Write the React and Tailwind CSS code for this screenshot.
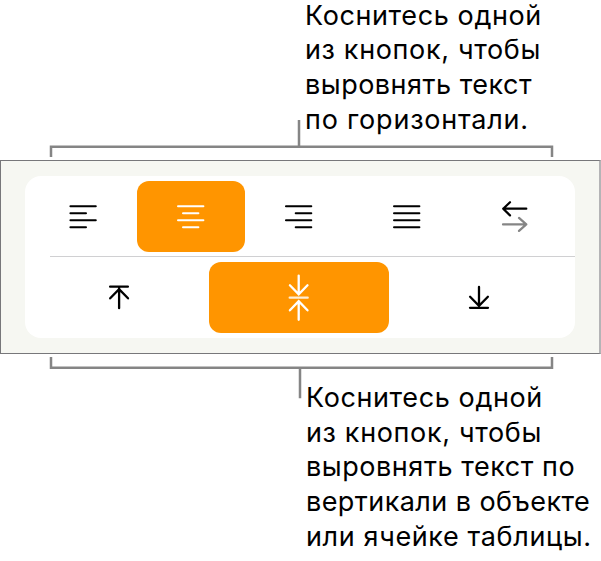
const ROW_ICONS = [
  { id: "left", d: "M1.4 2.3h25.400M1.4 9.300h15.600M1.4 16.300h25.400M1.4 23.300h15.600" },
  { id: "center", d: "M1 2.3h25.400M6 9.300h15.400M1 16.300h25.400M6 23.300h15.400" },
  { id: "right", d: "M0.9 2.3h25.400M10.7 9.300h15.600M0.9 16.300h25.400M10.7 23.300h15.600" },
  { id: "justify", d: "M1 2.3h25.400M1 9.300h25.400M1 16.300h25.400M1 23.300h25.400" },
];

function LinesIcon({ d }) {
  return (
    <svg width="28" height="25" viewBox="0 0 28 25" fill="none" stroke="currentColor" strokeWidth="2" strokeLinecap="round">
      <path d={d} />
    </svg>
  );
}

function DirectionIcon() {
  return (
    <svg width="28" height="33" viewBox="0 0 28 33" fill="none" strokeWidth="2.2" strokeLinecap="round" strokeLinejoin="round">
      <path d="M25.3 8.700H2.200M9 2.200L2.200 8.700l6.800 6.700" stroke="#000" />
      <path d="M2 24.400h23.300M18 17.900l7.300 6.500-7.300 6.500" stroke="#858585" />
    </svg>
  );
}

function TopIcon() {
  return (
    <svg width="22" height="27" viewBox="0 0 22 27" fill="none" stroke="currentColor" strokeWidth="2.3" strokeLinecap="round">
      <path d="M2.100 2.700h17.800M11.100 4v20.200M2.200 14.300l8.900-9.200 8.900 9.200" />
    </svg>
  );
}

function MiddleIcon() {
  return (
    <svg width="22" height="49" viewBox="0 0 22 49" fill="none" stroke="currentColor" strokeWidth="2.3" strokeLinecap="round">
      <path d="M10.700 2.600v18.600M1.900 12.300l8.800 9 8.800-9M10.700 46.800V28.200M1.900 37.300l8.800-9.200 8.800 9.200" />
      <path d="M1.700 24.700h18" stroke="#ffeed4" />
    </svg>
  );
}

function BottomIcon() {
  return (
    <svg width="22" height="27" viewBox="0 0 22 27" fill="none" stroke="currentColor" strokeWidth="2.3" strokeLinecap="round">
      <path d="M2 23.800h18M11 3v18.500M2.100 12.800l8.900 9 8.900-9" />
    </svg>
  );
}

export default function App() {
  return (
    <div className="flex h-[561px] w-[601px] flex-col bg-white font-['Inter',sans-serif] text-[27px] leading-[34.700px] text-black">
      <div className="relative h-40 shrink-0">
        <div className="ml-[305px] whitespace-nowrap">
          <p className="h-[33.300px] leading-[31px] tracking-[0.6px]">Коснитесь одной</p>
          <p className="tracking-[0.65px]">из кнопок, чтобы</p>
          <p className="tracking-[0.5px]">выровнять текст</p>
          <p className="tracking-[0.78px]">по горизонтали.</p>
        </div>
        <svg className="absolute top-0 left-0" width="601" height="160" fill="none" stroke="#858585" strokeWidth="2.5">
          <path d="M51 157v-10.200h501v10.200M299 120v26.800" />
        </svg>
      </div>

      <div className="h-[194px] w-[601px] shrink-0 border border-r-2 border-[#77777a] border-r-[#b4b4b6] bg-[#f6f7f2] px-6 py-[15px]">
        <div className="h-[162px] w-[549.500px] rounded-2xl bg-white pt-[5px]">
          <div className="flex h-[71px] pl-1">
            {ROW_ICONS.map((icon) => (
              <button
                key={icon.id}
                className={
                  icon.id === "center"
                    ? "flex w-[108px] items-center justify-center rounded-xl bg-[#ff9500] text-white"
                    : "flex w-[108px] items-center justify-center"
                }
              >
                <LinesIcon d={icon.d} />
              </button>
            ))}
            <button className="flex w-[108px] items-center justify-center">
              <DirectionIcon />
            </button>
          </div>
          <div className="mt-1 ml-[25px] h-px bg-[#d0d0d2]" />
          <div className="mt-[5px] flex h-[71px] pl-1">
            <button className="flex w-[180px] items-center justify-center">
              <TopIcon />
            </button>
            <button className="flex w-[180px] items-center justify-center rounded-xl bg-[#ff9500] text-white">
              <MiddleIcon />
            </button>
            <button className="flex w-[180px] items-center justify-center">
              <BottomIcon />
            </button>
          </div>
        </div>
      </div>

      <div className="relative h-[207px] shrink-0">
        <svg className="absolute top-0 left-0" width="601" height="60" fill="none" stroke="#858585" strokeWidth="2.5">
          <path d="M51 3v10.800h501V3M300 13.800v30.500" />
        </svg>
        <div className="mt-[27px] ml-[306px] whitespace-nowrap">
          <p className="tracking-[0.6px]">Коснитесь одной</p>
          <p className="tracking-[0.65px]">из кнопок, чтобы</p>
          <p className="tracking-[0.55px]">выровнять текст по</p>
          <p className="tracking-[0.43px]">вертикали в объекте</p>
          <p className="tracking-[0.63px]">или ячейке таблицы.</p>
        </div>
      </div>
    </div>
  );
}
